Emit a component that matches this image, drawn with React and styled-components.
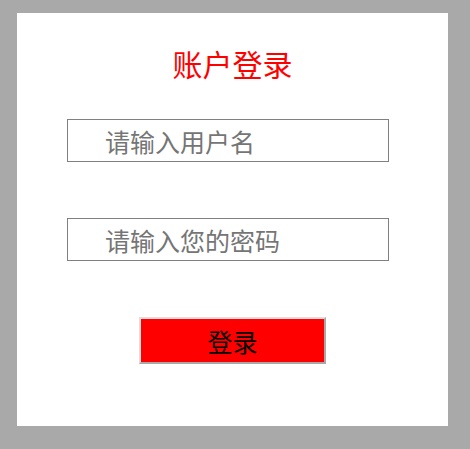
import React from "react";
import styled, { createGlobalStyle } from "styled-components";

const GlobalStyle = createGlobalStyle`
  html, body {
    margin: 0;
    padding: 0;
    background: #a9a9a9;
    width: 470px;
    height: 449px;
    overflow: hidden;
    font-family: "Noto Sans CJK SC", "Noto Sans", sans-serif;
  }
`;

const Page = styled.div`
  padding: 13px 22px 0 17px;
`;

const Card = styled.form`
  width: 431px;
  height: 413px;
  background: #fff;
  box-sizing: border-box;
  padding-top: 30px;
  display: flex;
  flex-direction: column;
  align-items: center;
`;

const Title = styled.h2`
  margin: 0;
  color: #ff0000;
  font-size: 30px;
  font-weight: normal;
  line-height: 40px;
`;

const Field = styled.input`
  width: 322px;
  height: 43px;
  box-sizing: border-box;
  margin: ${(p) => p.$top}px 9px 0 0;
  border: 1px solid #808080;
  padding: 0 0 0 37px;
  font-size: 25px;
  font-family: inherit;
  outline: none;
  &::placeholder {
    color: #757575;
  }
`;

const Submit = styled.button`
  width: 187px;
  height: 47px;
  margin-top: 56px;
  background: #ff0000;
  border: 2px solid;
  border-color: #dedede #a8a8a8 #a8a8a8 #dedede;
  font-size: 25px;
  font-family: inherit;
  color: #000;
  padding: 0;
`;

export default function App() {
  return (
    <>
      <GlobalStyle />
      <Page>
        <Card onSubmit={(e) => e.preventDefault()}>
          <Title>账户登录</Title>
          <Field $top={36} type="text" placeholder="请输入用户名" />
          <Field $top={56} type="password" placeholder="请输入您的密码" />
          <Submit type="submit">登录</Submit>
        </Card>
      </Page>
    </>
  );
}
